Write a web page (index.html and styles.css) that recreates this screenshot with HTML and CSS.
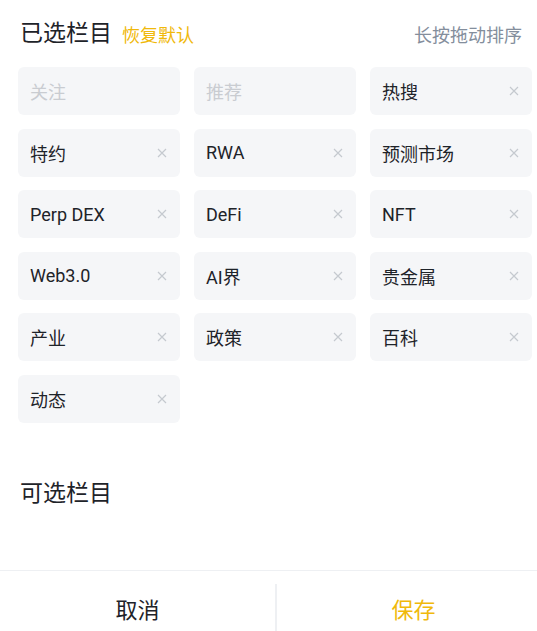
FILE: index.html
```html
<!DOCTYPE html>
<html lang="zh-CN">
<head>
    <meta charset="UTF-8">
    <meta name="viewport" content="width=device-width, initial-scale=1.0">
    <title>栏目管理</title>
    <link rel="stylesheet" href="styles.css">
</head>
<body>
    <main>
        <div class="section-head">
            <div class="head-left">
                <h2>已选栏目</h2>
                <span class="reset">恢复默认</span>
            </div>
            <span class="hint">长按拖动排序</span>
        </div>

        <div class="tab-grid">
            <div class="tab fixed"><span>关注</span></div>
            <div class="tab fixed"><span>推荐</span></div>
            <div class="tab"><span>热搜</span><svg class="close" viewBox="0 0 10 10"><path d="M1 1L9 9M9 1L1 9"/></svg></div>
            <div class="tab"><span>特约</span><svg class="close" viewBox="0 0 10 10"><path d="M1 1L9 9M9 1L1 9"/></svg></div>
            <div class="tab"><span>RWA</span><svg class="close" viewBox="0 0 10 10"><path d="M1 1L9 9M9 1L1 9"/></svg></div>
            <div class="tab"><span>预测市场</span><svg class="close" viewBox="0 0 10 10"><path d="M1 1L9 9M9 1L1 9"/></svg></div>
            <div class="tab"><span>Perp DEX</span><svg class="close" viewBox="0 0 10 10"><path d="M1 1L9 9M9 1L1 9"/></svg></div>
            <div class="tab"><span>DeFi</span><svg class="close" viewBox="0 0 10 10"><path d="M1 1L9 9M9 1L1 9"/></svg></div>
            <div class="tab"><span>NFT</span><svg class="close" viewBox="0 0 10 10"><path d="M1 1L9 9M9 1L1 9"/></svg></div>
            <div class="tab"><span>Web3.0</span><svg class="close" viewBox="0 0 10 10"><path d="M1 1L9 9M9 1L1 9"/></svg></div>
            <div class="tab"><span>AI界</span><svg class="close" viewBox="0 0 10 10"><path d="M1 1L9 9M9 1L1 9"/></svg></div>
            <div class="tab"><span>贵金属</span><svg class="close" viewBox="0 0 10 10"><path d="M1 1L9 9M9 1L1 9"/></svg></div>
            <div class="tab"><span>产业</span><svg class="close" viewBox="0 0 10 10"><path d="M1 1L9 9M9 1L1 9"/></svg></div>
            <div class="tab"><span>政策</span><svg class="close" viewBox="0 0 10 10"><path d="M1 1L9 9M9 1L1 9"/></svg></div>
            <div class="tab"><span>百科</span><svg class="close" viewBox="0 0 10 10"><path d="M1 1L9 9M9 1L1 9"/></svg></div>
            <div class="tab"><span>动态</span><svg class="close" viewBox="0 0 10 10"><path d="M1 1L9 9M9 1L1 9"/></svg></div>
        </div>

        <div class="section-head optional">
            <h2>可选栏目</h2>
        </div>
    </main>

    <footer>
        <button class="cancel">取消</button>
        <button class="save">保存</button>
    </footer>
</body>
</html>
```

FILE: styles.css
```css
body {
    font-family: Roboto, "Noto Sans CJK SC", sans-serif;
    margin: 0;
    padding: 0;
    background-color: #fff;
    color: #1e2329;
    display: flex;
    flex-direction: column;
    min-height: 100vh;
    overflow: hidden;
}
main {
    flex: 1;
}
.section-head {
    height: 67px;
    display: flex;
    align-items: center;
    justify-content: space-between;
    padding: 0 15px 0 20px;
    box-sizing: border-box;
}
.head-left {
    display: flex;
    align-items: center;
    gap: 10px;
}
.section-head h2 {
    margin: 0;
    font-size: 23px;
    font-weight: 400;
    line-height: 32px;
}
.reset {
    font-size: 18px;
    color: #f0b90b;
}
.hint {
    font-size: 18px;
    color: #848e9c;
}
.tab-grid {
    display: grid;
    grid-template-columns: repeat(3, 1fr);
    grid-auto-rows: 48px;
    column-gap: 14px;
    row-gap: 13.5px;
    padding: 0 5px 0 18px;
}
.tab {
    background-color: #f5f6f8;
    border-radius: 6px;
    display: flex;
    align-items: center;
    justify-content: space-between;
    padding: 0 13px 0 12px;
    font-size: 18px;
}
.tab.fixed {
    color: #c9ccd1;
}
.close {
    width: 10px;
    height: 10px;
    stroke: #c5c9cf;
    stroke-width: 1.2;
    fill: none;
}
.optional {
    margin-top: 55px;
    height: 32px;
}
footer {
    display: flex;
    height: 61px;
    border-top: 1px solid #eef0f3;
    box-sizing: border-box;
}
footer button {
    flex: 0 0 275px;
    margin-top: 13px;
    height: 48px;
    background: none;
    border: none;
    font-family: Roboto, "Noto Sans CJK SC", sans-serif;
    font-size: 22px;
    color: #1e2329;
    padding: 0;
}
footer .save {
    color: #f0b90b;
    border-left: 2px solid #eef0f3;
}
```
